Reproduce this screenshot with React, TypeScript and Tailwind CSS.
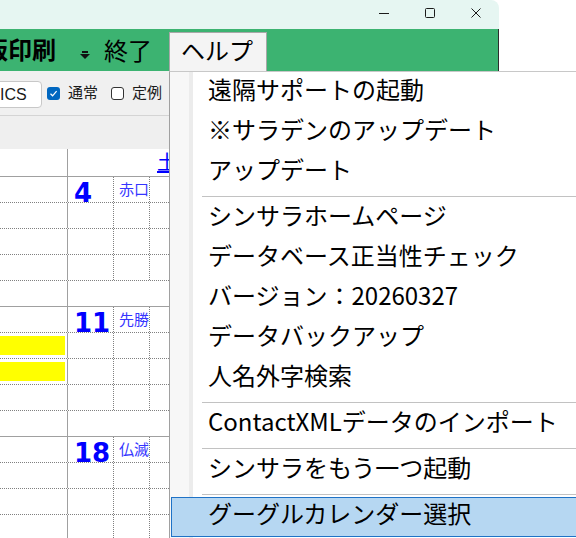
import React from "react";

// one week block = 5 sub rows of 26px
interface Week {
  day: string;
  rokuyo: string;
  yellow: number[];
}

const weeks: Week[] = [
  { day: "4", rokuyo: "赤口", yellow: [] },
  { day: "11", rokuyo: "先勝", yellow: [1, 2] },
  { day: "18", rokuyo: "仏滅", yellow: [] },
];

type MenuEntry = { label: string } | "sep";

const helpMenu: MenuEntry[] = [
  { label: "遠隔サポートの起動" },
  { label: "※サラデンのアップデート" },
  { label: "アップデート" },
  "sep",
  { label: "シンサラホームページ" },
  { label: "データベース正当性チェック" },
  { label: "バージョン：20260327" },
  { label: "データバックアップ" },
  { label: "人名外字検索" },
  "sep",
  { label: "ContactXMLデータのインポート" },
  "sep",
  { label: "シンサラをもう一つ起動" },
  "sep",
];

function WeekBlock({ week }: { week: Week }) {
  return (
    <div className="flex flex-col">
      {[0, 1, 2, 3, 4].map((r) => (
        <div
          key={r}
          className={
            r === 4
              ? "flex h-[26px] border-b border-solid border-[#a0a0a0]"
              : "flex h-[26px] border-b border-dotted border-[#808080]"
          }
        >
          <div className="w-[68px] h-[25px] border-r border-solid border-[#a0a0a0] pr-[2px] pt-[3px]">
            {week.yellow.includes(r) && <div className="h-[19px] bg-[#ffff00]" />}
          </div>
          {r < 4 ? (
            <>
              <div className="w-[46px] h-[25px] border-r border-dotted border-[#808080] pl-[6px]">
                {r === 0 && (
                  <div className="pt-[3px] text-[26px] leading-[26px] font-bold text-[#0000ff] font-['DejaVu_Sans',sans-serif] whitespace-nowrap">
                    {week.day}
                  </div>
                )}
              </div>
              <div className="w-[36px] h-[25px] border-r border-dotted border-[#808080] pl-[5px] flex items-center">
                {r === 0 && (
                  <span className="text-[15px] leading-[15px] text-[#3535ff] pb-[3px] whitespace-nowrap">
                    {week.rokuyo}
                  </span>
                )}
              </div>
              <div className="flex-1" />
            </>
          ) : (
            <div className="flex-1" />
          )}
        </div>
      ))}
    </div>
  );
}

export default function App() {
  return (
    <div className="relative w-[576px] h-[538px] overflow-hidden bg-white text-black font-['Noto_Sans_CJK_JP',sans-serif]">
      <div className="w-[499px]">
        {/* title bar */}
        <div className="h-[29px] bg-[#e6f6f2] rounded-tr-[8px] flex justify-end">
          <div className="w-[46px] h-[29px] flex justify-center pt-[8px]">
            <svg width="10" height="10" viewBox="0 0 10 10">
              <line x1="0" y1="5.5" x2="10" y2="5.5" stroke="#1b1b1b" strokeWidth="1" />
            </svg>
          </div>
          <div className="w-[46px] h-[29px] flex justify-center pt-[8px]">
            <svg width="10" height="10" viewBox="0 0 10 10">
              <rect x="0.5" y="0.5" width="9" height="9" rx="1" fill="none" stroke="#1b1b1b" strokeWidth="1" />
            </svg>
          </div>
          <div className="w-[46px] h-[29px] flex justify-center pt-[8px]">
            <svg width="10" height="10" viewBox="0 0 10 10">
              <path d="M0.5 0.5 L9.5 9.5 M9.5 0.5 L0.5 9.5" stroke="#1b1b1b" strokeWidth="1" />
            </svg>
          </div>
        </div>

        {/* menu bar */}
        <div className="h-[42px] bg-[#3cb371] border-r border-[#2d2d2d] flex items-start">
          <div className="ml-[-16px] h-[42px] flex items-center pb-[3px] text-[24px] font-bold whitespace-nowrap">
            版印刷
          </div>
          <div className="ml-[24px] h-[42px] flex items-center pt-[10px]">
            <svg width="10" height="8" viewBox="0 0 10 8">
              <rect x="2" y="0" width="6" height="2" fill="#111" />
              <path d="M0 3 L10 3 L5 8 Z" fill="#111" />
            </svg>
          </div>
          <div className="ml-[14px] h-[42px] flex items-center pb-[1px] text-[24px] whitespace-nowrap">
            終了
          </div>
          <div className="ml-[17px] mt-[3px] h-[39px] w-[98px] bg-[#f4f4f4] border border-b-0 border-[#a8a8a8] pl-[11px] flex items-center pb-[4px] text-[24px] whitespace-nowrap">
            ヘルプ
          </div>
        </div>

        {/* toolbar */}
        <div className="h-[45px] bg-[#f0f0f0] border-b border-[#d4d4d4] flex items-center">
          <div className="ml-[-10px] mt-[3px] w-[52px] h-[27px] bg-white border border-[#c8c8c8] rounded-[4px] pl-[9px] flex items-center font-['Liberation_Sans',sans-serif] text-[16px] text-[#1a1a1a]">
            ICS
          </div>
          <div className="ml-[5px] w-[13px] h-[13px] rounded-[3px] bg-[#0067c0] flex items-center justify-center">
            <svg width="9" height="9" viewBox="0 0 9 9">
              <path d="M1.5 4.8 L3.6 6.8 L7.6 2.2" fill="none" stroke="#fff" strokeWidth="1.2" />
            </svg>
          </div>
          <span className="ml-[8px] text-[15px] text-[#1a1a1a] pb-[1px]">通常</span>
          <div className="ml-[13px] w-[13px] h-[13px] rounded-[3px] bg-white border border-[#333]" />
          <span className="ml-[8px] text-[15px] text-[#1a1a1a] pb-[1px]">定例</span>
        </div>

        {/* header band */}
        <div className="h-[33px] bg-[#efefef]" />

        {/* calendar grid */}
        <div className="bg-white">
          <div className="flex h-[28px] border-b border-[#a0a0a0]">
            <div className="w-[68px] border-r border-[#a0a0a0]" />
            <div className="pl-[89px] pt-[2px] text-[20px] leading-[22px] text-[#0000ff] underline">土</div>
          </div>
          {weeks.map((w) => (
            <WeekBlock key={w.day} week={w} />
          ))}
        </div>
      </div>

      {/* help dropdown */}
      <div className="absolute left-[169px] top-[71px] w-[420px] h-[480px] border-l border-t border-l-[#a0a0a0] border-t-[#c8c8c8] pt-[1px] bg-[linear-gradient(to_right,#f7f7f7_0px,#f7f7f7_19px,#ececec_19px,#ececec_23px,#ffffff_23px)] text-[24px] text-black">
        {helpMenu.map((m, i) =>
          m === "sep" ? (
            <div key={i} className="h-[6px] pt-[3px] pl-[32px]">
              <div className="h-px bg-[#c2c2c2]" />
            </div>
          ) : (
            <div key={i} className="h-[40px] pl-[38px] pb-[9px] flex items-center whitespace-nowrap">
              {m.label}
            </div>
          )
        )}
        <div className="h-[40px] ml-[1px] border border-[#1f72c6] bg-[#b6d7f2] pl-[36px] pb-[8px] flex items-center whitespace-nowrap">
          グーグルカレンダー選択
        </div>
      </div>
    </div>
  );
}
